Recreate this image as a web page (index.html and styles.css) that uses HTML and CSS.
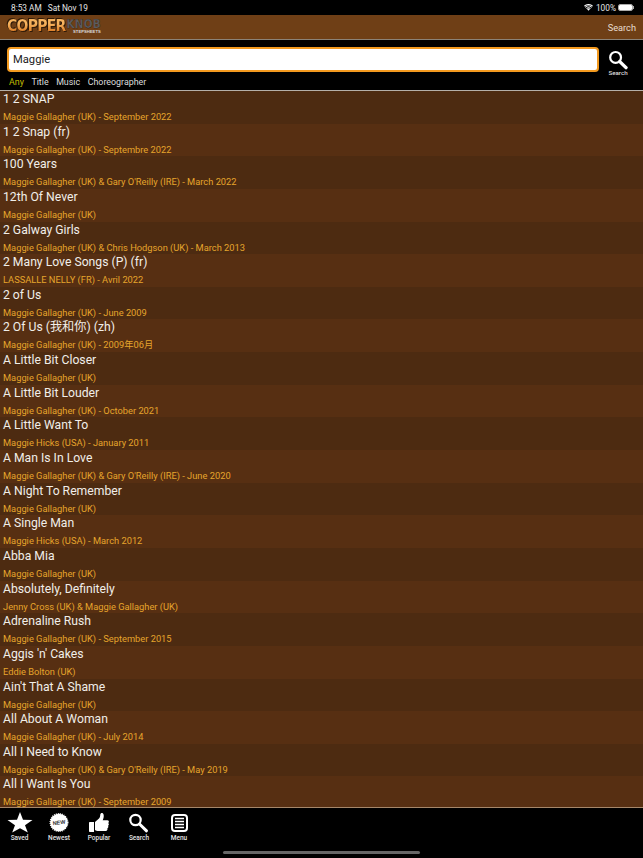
FILE: index.html
```html
<!DOCTYPE html>
<html lang="en">
<head>
<meta charset="utf-8">
<title>CopperKnob</title>
<link rel="stylesheet" href="styles.css">
</head>
<body>
<div class="app">
  <div class="status">
    <div class="status-left"><span>8:53 AM</span><span>Sat Nov 19</span></div>
    <div class="status-right">
      <svg class="wifi" viewBox="0 0 14 10"><path d="M7 10 4.900 7.600a3 3 0 0 1 4.200 0Z" fill="#fff"/><path d="M3.500 6.200a5 5 0 0 1 7 0l-1 1.100a3.600 3.600 0 0 0-5 0Z" fill="#fff"/><path d="M1.500 4.200a7.800 7.800 0 0 1 11 0l-1 1.100a6.400 6.400 0 0 0-9 0Z" fill="#fff"/><path d="M0 2.400a10 10 0 0 1 14 0l-.9 1a8.800 8.800 0 0 0-12.200 0Z" fill="#fff"/></svg>
      <span>100%</span>
      <div class="battery"><div class="battery-fill"></div></div><div class="battery-cap"></div>
    </div>
  </div>
  <header class="nav">
    <div class="logo"><span class="logo-copper">COPPER</span><span class="logo-knob"><span class="logo-knob-main">KNOB</span><span class="logo-sub">STEPSHEETS</span></span></div>
    <span class="nav-search">Search</span>
  </header>
  <section class="search">
    <div class="search-row">
      <div class="search-input">Maggie</div>
      <div class="search-btn">
        <svg class="icon-search-lg" viewBox="0 0 20 20"><circle cx="7.600" cy="7.400" r="5.400" fill="none" stroke="#fff" stroke-width="2.200"/><path d="M11.800 11.600 18 17.600" stroke="#fff" stroke-width="3.400" stroke-linecap="round"/></svg>
        <span>Search</span>
      </div>
    </div>
    <div class="filters"><span class="filter active">Any</span><span class="filter">Title</span><span class="filter">Music</span><span class="filter">Choreographer</span></div>
  </section>
  <main class="list">
    <div class="row"><div class="t">1 2 SNAP</div><div class="s">Maggie Gallagher (UK) - September 2022</div></div>
    <div class="row"><div class="t">1 2 Snap (fr)</div><div class="s">Maggie Gallagher (UK) - Septembre 2022</div></div>
    <div class="row"><div class="t">100 Years</div><div class="s">Maggie Gallagher (UK) &amp; Gary O'Reilly (IRE) - March 2022</div></div>
    <div class="row"><div class="t">12th Of Never</div><div class="s">Maggie Gallagher (UK)</div></div>
    <div class="row"><div class="t">2 Galway Girls</div><div class="s">Maggie Gallagher (UK) &amp; Chris Hodgson (UK) - March 2013</div></div>
    <div class="row"><div class="t">2 Many Love Songs (P) (fr)</div><div class="s">LASSALLE NELLY (FR) - Avril 2022</div></div>
    <div class="row"><div class="t">2 of Us</div><div class="s">Maggie Gallagher (UK) - June 2009</div></div>
    <div class="row"><div class="t">2 Of Us (我和你) (zh)</div><div class="s">Maggie Gallagher (UK) - 2009年06月</div></div>
    <div class="row"><div class="t">A Little Bit Closer</div><div class="s">Maggie Gallagher (UK)</div></div>
    <div class="row"><div class="t">A Little Bit Louder</div><div class="s">Maggie Gallagher (UK) - October 2021</div></div>
    <div class="row"><div class="t">A Little Want To</div><div class="s">Maggie Hicks (USA) - January 2011</div></div>
    <div class="row"><div class="t">A Man Is In Love</div><div class="s">Maggie Gallagher (UK) &amp; Gary O'Reilly (IRE) - June 2020</div></div>
    <div class="row"><div class="t">A Night To Remember</div><div class="s">Maggie Gallagher (UK)</div></div>
    <div class="row"><div class="t">A Single Man</div><div class="s">Maggie Hicks (USA) - March 2012</div></div>
    <div class="row"><div class="t">Abba Mia</div><div class="s">Maggie Gallagher (UK)</div></div>
    <div class="row"><div class="t">Absolutely, Definitely</div><div class="s">Jenny Cross (UK) &amp; Maggie Gallagher (UK)</div></div>
    <div class="row"><div class="t">Adrenaline Rush</div><div class="s">Maggie Gallagher (UK) - September 2015</div></div>
    <div class="row"><div class="t">Aggis 'n' Cakes</div><div class="s">Eddie Bolton (UK)</div></div>
    <div class="row"><div class="t">Ain't That A Shame</div><div class="s">Maggie Gallagher (UK)</div></div>
    <div class="row"><div class="t">All About A Woman</div><div class="s">Maggie Gallagher (UK) - July 2014</div></div>
    <div class="row"><div class="t">All I Need to Know</div><div class="s">Maggie Gallagher (UK) &amp; Gary O'Reilly (IRE) - May 2019</div></div>
    <div class="row"><div class="t">All I Want Is You</div><div class="s">Maggie Gallagher (UK) - September 2009</div></div>
  </main>
  <nav class="tabs">
    <div class="tab">
      <svg class="tab-icon" viewBox="0 0 28 24"><path d="M14 1 17 8.700 26.500 8.900 19 14.300 21.800 21.500 14 17.200 6.200 21.500 9 14.300 1.500 8.900 11 8.700Z" fill="#fff"/></svg>
      <span>Saved</span>
    </div>
    <div class="tab">
      <svg class="tab-icon" viewBox="0 0 28 24"><circle cx="14" cy="11.500" r="8.800" fill="#fff" stroke="#fff" stroke-width="1.400" stroke-dasharray="1 1"/><text x="14" y="13.500" class="new-text" text-anchor="middle" transform="rotate(-8 14 11.500)">NEW</text></svg>
      <span>Newest</span>
    </div>
    <div class="tab">
      <svg class="tab-icon" viewBox="0 0 28 24"><path d="M4.800 11h4.200v10H4.800c-.5 0-.8-.3-.8-.8v-8.400c0-.5.300-.8.800-.8Z" fill="#fff"/><path d="M10 11 14 7.500c.8-.9 1.200-2 1.300-4 .1-1.800 2.500-2.200 3.200-.2.600 1.800.1 4-.8 5.900h4.500c1.900 0 2.200 2 1 2.800 1 .8.900 2.200-.2 2.800.7.900.4 2.100-.6 2.500.4 1.200-.3 2.700-1.600 2.700h-7.300c-1.500 0-2.500-.4-3.500-1Z" fill="#fff"/></svg>
      <span>Popular</span>
    </div>
    <div class="tab">
      <svg class="tab-icon" viewBox="0 0 28 24"><circle cx="10.500" cy="9" r="5.200" fill="none" stroke="#fff" stroke-width="2.200"/><path d="M14.500 13 21.500 19.800" stroke="#fff" stroke-width="3" stroke-linecap="round"/></svg>
      <span>Search</span>
    </div>
    <div class="tab">
      <svg class="tab-icon" viewBox="0 0 28 24"><rect x="7" y="4" width="15" height="16" rx="3" fill="none" stroke="#fff" stroke-width="2"/><path d="M10 7.500h9M10 10.500h9M10 13.500h9M10 16.500h9" stroke="#fff" stroke-width="1.700"/></svg>
      <span>Menu</span>
    </div>
  </nav>
  <div class="home"></div>
</div>
</body>
</html>
```
FILE: styles.css
```css
* { box-sizing: border-box; }
html, body { margin: 0; padding: 0; background: #000; }
body { font-family: Roboto, "Noto Sans CJK SC", sans-serif; color: #fff; }
.app { width: 643px; height: 858px; display: flex; flex-direction: column; overflow: hidden; position: relative; }

.status { height: 15px; flex: none; background: #000; display: flex; justify-content: space-between; align-items: center; padding: 0 9px 0 11px; font-size: 8.300px; color: #e6e6e6; }
.status-left { display: flex; gap: 6px; }
.status-right { display: flex; align-items: center; gap: 2px; }
.wifi { width: 9px; height: 7px; margin-right: 1px; }
.battery { width: 15px; height: 7px; border: 1px solid #aaa; border-radius: 2px; }
.battery-fill { width: 100%; height: 100%; background: #fff; border-radius: 1px; }
.battery-cap { width: 1px; height: 3px; background: #aaa; margin-left: -2px; }

.nav { height: 25px; flex: none; background: #6f3f16; border-bottom: 1px solid #8b8378; display: flex; justify-content: space-between; align-items: center; padding: 0 7px; }
.logo { display: flex; align-items: center; height: 24px; }
.logo-copper { font-family: "DejaVu Sans", sans-serif; font-stretch: condensed; font-weight: 700; font-size: 15.500px; letter-spacing: -.7px; line-height: 1; background: linear-gradient(#f6b35e 30%, #d97a24 80%); -webkit-background-clip: text; background-clip: text; color: transparent; filter: drop-shadow(1px 1px 0 #2f1a08) drop-shadow(-.5px -.5px 0 #2f1a08); }
.logo-knob { display: flex; flex-direction: column; align-items: flex-end; margin-left: 1px; }
.logo-knob-main { font-family: "DejaVu Sans", sans-serif; font-stretch: condensed; font-weight: 700; font-size: 11.500px; line-height: 9px; letter-spacing: .2px; color: #5e5d60; -webkit-text-stroke: .25px #1c1a18; }
.logo-sub { font-family: "Liberation Sans", sans-serif; font-weight: 700; font-size: 4.200px; line-height: 5px; color: #d8d8d8; }
.nav-search { font-size: 9.200px; color: #e8ddd0; }

.search { height: 51px; flex: none; background: #000; border-bottom: 1px solid #b5b0a9; padding: 7px 0 0 7px; display: flex; flex-direction: column; }
.search-row { display: flex; align-items: flex-start; }
.search-input { width: 592px; height: 25px; background: #fff; border: 2px solid #f39a1f; border-radius: 4px; color: #222; font-size: 11.200px; line-height: 21px; padding-left: 4px; }
.search-btn { display: flex; flex-direction: column; align-items: center; margin-left: 8px; width: 22px; font-size: 6.200px; line-height: 6px; font-weight: 500; color: #ddd; }
.icon-search-lg { width: 20px; height: 20px; margin-top: 3px; display: block; }
.filters { display: flex; gap: 7.500px; margin-top: -1px; padding-left: 2px; font-size: 8.900px; line-height: 14px; color: #ddd; }
.filter.active { color: #c2bd00; }

.list { flex: 1; min-height: 0; overflow: hidden; background: #4d2b11; border-bottom: 1px solid #a5876a; }
.row { height: 32.650px; padding-left: 3px; overflow: hidden; background: #4d2b11; }
.row:nth-child(even) { background: #572f12; }
.t { font-size: 12.200px; line-height: 17px; color: #f1eee9; }
.s { font-size: 9.300px; line-height: 16px; padding-top: 1px; color: #e6a52c; }

.tabs { height: 50px; flex: none; background: #000; display: flex; align-items: flex-start; padding-top: 3px; }
.tab { width: 40px; display: flex; flex-direction: column; align-items: center; font-size: 6.500px; font-weight: 500; color: #e4e4e4; line-height: 6px; }
.tab:first-child { width: 39px; }
.tab-icon { width: 28px; height: 24px; display: block; }
.new-text { font: 700 5.500px "Liberation Sans", sans-serif; fill: #333; }

.home { position: absolute; left: 223px; bottom: 4px; width: 197px; height: 3px; border-radius: 2px; background: #666; }
```
